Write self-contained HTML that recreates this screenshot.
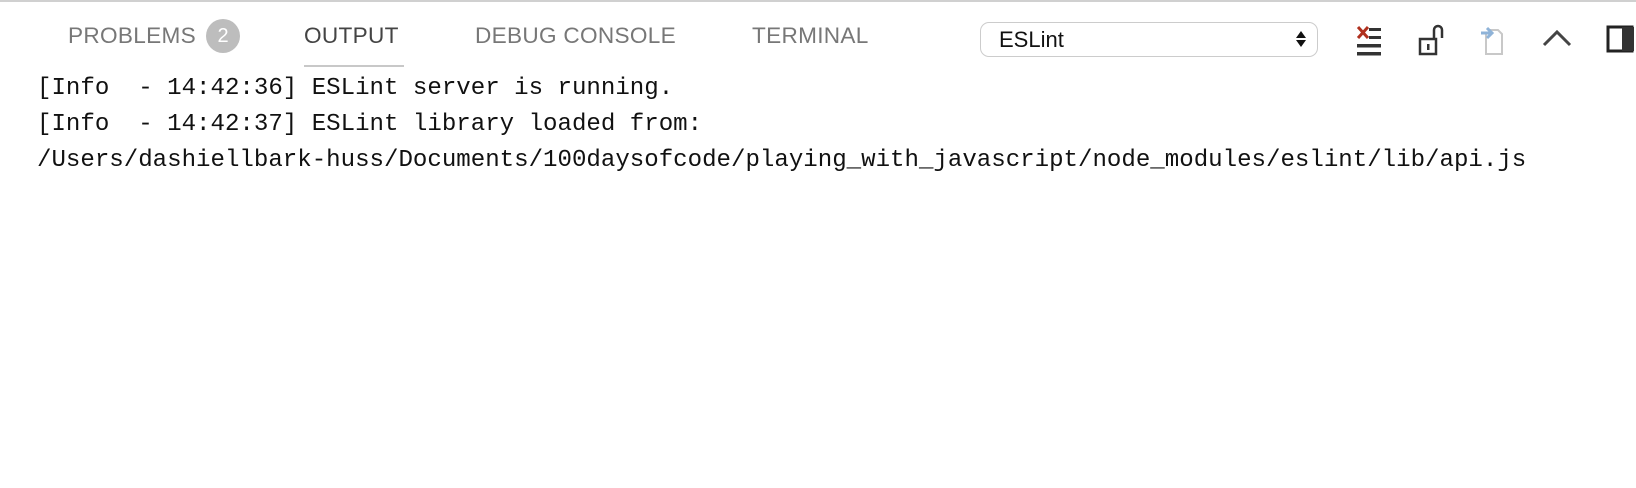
<!DOCTYPE html>
<html><head><style>
html,body{margin:0;padding:0;width:1636px;height:488px;background:#fff;overflow:hidden;position:relative}
.top{position:absolute;left:0;top:0;width:1636px;height:2px;background:#d0d0d0}
.tab{position:absolute;top:23px;font-family:"Liberation Sans",sans-serif;font-size:22.6px;color:#777;letter-spacing:0.3px}
.badge{position:absolute;left:206px;top:19px;width:34px;height:34px;border-radius:17px;background:#bdbdbd;color:#fff;font:20px "Liberation Sans",sans-serif;text-align:center;line-height:34px}
.ul{position:absolute;left:304px;top:65px;width:100px;height:2px;background:#c8c8c8}
.sel{position:absolute;left:980px;top:22px;width:338px;height:35px;border:1.5px solid #ccc;border-radius:9px;box-sizing:border-box;font:22px "Liberation Sans",sans-serif;color:#111;line-height:33px;padding-left:18px}
.log{position:absolute;left:37px;top:71px;font:24.1px/36px "Liberation Mono",monospace;color:#111;white-space:pre}
</style></head><body>
<div class="top"></div>
<div class="tab" style="left:68px">PROBLEMS</div>
<div class="badge">2</div>
<div class="tab" style="left:304px;color:#444">OUTPUT</div>
<div class="ul"></div>
<div class="tab" style="left:475px">DEBUG CONSOLE</div>
<div class="tab" style="left:752px">TERMINAL</div>
<div class="sel">ESLint<svg style="position:absolute;right:10px;top:7px" width="12" height="18"><path d="M1 8L6 1L11 8Z M1 10L6 17L11 10Z" fill="#111"/></svg></div>
<svg style="position:absolute;left:1354px;top:24px" width="30" height="34">
<path d="M4 3L14 14M14 3L4 14" stroke="#b0301e" stroke-width="3"/>
<rect x="15" y="4" width="12" height="3" fill="#333"/><rect x="15" y="12" width="12" height="3" fill="#333"/>
<rect x="3" y="20" width="24" height="3.5" fill="#333"/><rect x="3" y="28" width="24" height="3.5" fill="#333"/>
</svg>
<svg style="position:absolute;left:1418px;top:24px" width="30" height="34">
<rect x="2" y="15" width="16" height="15" fill="none" stroke="#333" stroke-width="2.5"/>
<path d="M16 15V6a4 4 0 0 1 8 0v8" fill="none" stroke="#333" stroke-width="2.5"/>
<rect x="9" y="20" width="2.5" height="6" fill="#333"/>
</svg>
<svg style="position:absolute;left:1480px;top:24px" width="30" height="34">
<path d="M6 8V30H22V10L18 6H10" fill="none" stroke="#c8c8c8" stroke-width="2"/>
<path d="M1 9H10M7 4L12 9L7 14" fill="none" stroke="#8fb3d8" stroke-width="3"/>
</svg>
<svg style="position:absolute;left:1540px;top:25px" width="36" height="26">
<path d="M4 20L17 7L30 20" fill="none" stroke="#444" stroke-width="3"/>
</svg>
<svg style="position:absolute;left:1606px;top:23px" width="30" height="34">
<rect x="2" y="4" width="24" height="24" fill="none" stroke="#222" stroke-width="3"/>
<rect x="16" y="4" width="12" height="24" fill="#333"/>
</svg>
<div class="log">[Info  - 14:42:36] ESLint server is running.
[Info  - 14:42:37] ESLint library loaded from:
/Users/dashiellbark-huss/Documents/100daysofcode/playing_with_javascript/node_modules/eslint/lib/api.js</div>
</body></html>
